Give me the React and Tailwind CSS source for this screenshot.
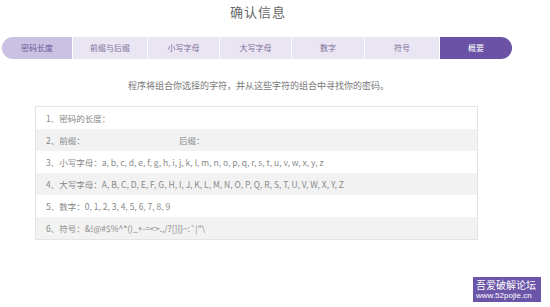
import React from 'react';

const TABS = ['密码长度', '前缀与后缀', '小写字母', '大写字母', '数字', '符号', '概要'];
const WIDTHS = ['w-[71px]', 'w-[75px]', 'w-[72px]', 'w-[72px]', 'w-[73px]', 'w-[75px]', 'w-[72px]'];

const lower = 'a, b, c, d, e, f, g, h, i, j, k, l, m, n, o, p, q, r, s, t, u, v, w, x, y, z';
const upper = 'A, B, C, D, E, F, G, H, I, J, K, L, M, N, O, P, Q, R, S, T, U, V, W, X, Y, Z';

const Row = ({ gray, children }) => (
    <div className={`h-[22px] flex items-center pl-[10px] ${gray ? 'bg-[#f2f2f2]' : 'bg-white'}`}>
        {children}
    </div>
);

export default function App() {
    return (
        <div
            className="relative w-[550px] h-[307px] bg-white overflow-hidden text-[#777]"
            style={{ fontFamily: '"Noto Sans CJK SC", "Liberation Sans", sans-serif' }}
        >
            {/* Title */}
            <div className="pt-[3px] h-[37px] pl-[230px] text-[13px] leading-[18px] tracking-[1px] text-[#666]">确认信息</div>

            {/* Tabs */}
            <div className="flex ml-[2px] h-[22px]">
                {TABS.map((t, i) => {
                    const first = i === 0;
                    const last = i === TABS.length - 1;
                    return (
                        <div
                            key={t}
                            className={`${WIDTHS[i]} flex items-center justify-center text-[8px] ${last ? 'border-r-0' : 'border-r border-white'}
                                ${first ? 'bg-[#cbc1e3] rounded-l-full text-[#6a5a98]' : last ? 'bg-[#6b52a6] rounded-r-full text-white' : 'bg-[#e9e5f3] text-[#7c7096]'}`}
                        >
                            {t}
                        </div>
                    );
                })}
            </div>

            {/* Subtitle */}
            <div className="mt-[21px] pl-[128px] text-[9px] leading-[12px] text-[#777]">
                程序将组合你选择的字符，并从这些字符的组合中寻找你的密码。
            </div>

            {/* Summary table */}
            <div className="mt-[14px] ml-[35px] w-[443px] border border-[#e4e4e4] text-[8.5px] text-[#888] flex flex-col">
                <Row>1、密码的长度：</Row>
                <Row gray>
                    <span className="w-[133px]">2、前缀：</span>
                    <span>后缀：</span>
                </Row>
                <Row>3、小写字母：{lower}</Row>
                <Row gray>4、大写字母：{upper}</Row>
                <Row>5、数字：0, 1, 2, 3, 4, 5, 6, 7, 8, 9</Row>
                <Row gray>6、符号：&amp;!@#$%^*()_+-=&lt;&gt;.,/?[]{'{}'}~:`|"\</Row>
            </div>

            {/* Watermark */}
            <div className="absolute left-[473px] top-[277px] w-[68px] h-[25px] bg-[#6b55a8] flex flex-col items-start justify-center pl-[3px]">
                <span className="text-[10px] leading-[13px] text-white whitespace-nowrap">吾爱破解论坛</span>
                <span className="text-[8px] leading-[10px] text-white whitespace-nowrap" style={{ fontFamily: '"Liberation Sans", sans-serif' }}>www.52pojie.cn</span>
            </div>
        </div>
    );
}
